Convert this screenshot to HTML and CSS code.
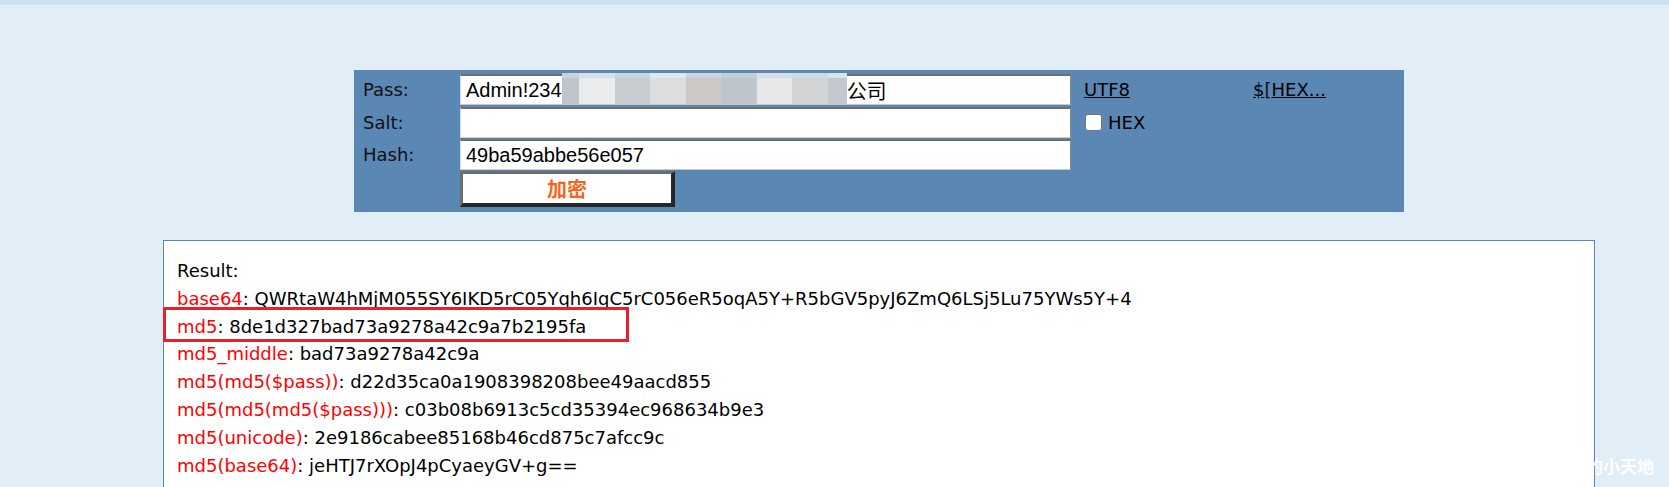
FILE: index.html
```html
<!DOCTYPE html>
<html lang="zh-CN">
<head>
    <meta charset="UTF-8">
    <title>Hash</title>
    <link rel="stylesheet" href="styles.css">
</head>
<body>

    <div class="topbar"></div>

    <div class="page">
        <!-- input form -->
        <form class="panel" onsubmit="return false">
            <label class="label">Pass:</label>
            <div class="field pass">
                <span>Admin!234</span>
                <span class="mosaic"></span>
                <span>公司</span>
            </div>
            <div class="links"><a href="#">UTF8</a></div>
            <div class="links"><a href="#">$</a>[<a href="#">HEX...</a></div>

            <label class="label">Salt:</label>
            <input class="field" type="text" value="">
            <label class="hex"><input type="checkbox"> HEX</label>

            <label class="label">Hash:</label>
            <input class="field" type="text" value="49ba59abbe56e057">

            <button class="btn-encrypt" type="submit">加密</button>
        </form>

        <!-- result list -->
        <div class="result">
            <div>Result:</div>
            <div><span class="key">base64</span>: QWRtaW4hMjM055SY6IKD5rC05Yqh6IqC5rC056eR5oqA5Y+R5bGV5pyJ6ZmQ6LSj5Lu75YWs5Y+4</div>
            <div><span class="key">md5</span>: 8de1d327bad73a9278a42c9a7b2195fa</div>
            <div><span class="key">md5_middle</span>: bad73a9278a42c9a</div>
            <div><span class="key">md5(md5($pass))</span>: d22d35ca0a1908398208bee49aacd855</div>
            <div><span class="key">md5(md5(md5($pass)))</span>: c03b08b6913c5cd35394ec968634b9e3</div>
            <div><span class="key">md5(unicode)</span>: 2e9186cabee85168b46cd875c7afcc9c</div>
            <div><span class="key">md5(base64)</span>: jeHTJ7rXOpJ4pCyaeyGV+g==</div>
            <div class="mark"></div>
        </div>
    </div>

    <div class="watermark">的小天地</div>

</body>
</html>
```

FILE: styles.css
```css
/* Basic Styles */
html, body {
    overflow: hidden;
}

body {
    margin: 0;
    background-color: #e1eef7;
    font-family: "DejaVu Sans", Verdana, sans-serif;
    color: #111;
}

.topbar {
    height: 5px;
    background-color: #cbe0ef;
}

.page {
    width: 1432px;
    margin-left: 163px;
}

/* Form panel */
.panel {
    width: 1050px;
    height: 142px;
    box-sizing: border-box;
    margin: 65px auto 0;
    padding: 4px 0 0 9px;
    background-color: #5b87b4;
    display: grid;
    grid-template-columns: 97px 624px 169px 1fr;
    grid-template-rows: 33px 32px 32px 36px;
    align-items: start;
}

.label {
    grid-column: 1;
    font-size: 18px;
    line-height: 31px;
    color: #111;
}

.field {
    grid-column: 2;
    width: 611px;
    height: 31px;
    box-sizing: border-box;
    margin: 0;
    padding: 0 5px;
    background: #fff;
    border-style: solid;
    border-width: 2px 1px 1px 1px;
    border-color: #6f6f6f #8a8a8a #c9c9c9 #d6d6d6;
    font-family: "Liberation Sans", Arial, "Noto Sans CJK SC", sans-serif;
    font-size: 20px;
    color: #000;
    outline: none;
}

.pass {
    display: flex;
    align-items: center;
}

.mosaic {
    width: 285px;
    align-self: stretch;
    margin: -3px 0 0 0;
    background:
        linear-gradient(90deg, #c9d3dc 0 17px, #d4dfe8 17px 53px, #c8d6e3 53px 88px, #dde8f1 88px 124px,
            #ccd6dd 124px 159px, #c3ced6 159px 195px, #d6dfe6 195px 230px, #c8dde8 230px 266px, #d6e4ee 266px 285px)
            top left / 100% 5px no-repeat,
        linear-gradient(90deg, #bfc3ca 0 17px, #ebecee 17px 53px, #c9ccd0 53px 88px, #dcdddf 88px 124px,
            #cbc9c5 124px 159px, #bec5cc 159px 195px, #e6e7e9 195px 230px, #d3d4d6 230px 266px, #c3c8ce 266px 285px);
}

.links {
    font-size: 18px;
    line-height: 31px;
}

.links a {
    color: #000;
    text-decoration: underline;
}

.hex {
    grid-column: 3;
    display: flex;
    align-items: center;
    gap: 6px;
    height: 31px;
    font-size: 18px;
    color: #000;
}

.hex input {
    appearance: none;
    width: 17px;
    height: 17px;
    margin: 0 0 0 1px;
    background: #fff;
    border: 1px solid #767676;
    border-radius: 3px;
}

.btn-encrypt {
    grid-column: 2;
    width: 215px;
    height: 36px;
    margin: 0;
    padding: 0;
    background: #fff;
    border-style: solid;
    border-width: 3px 4px 4px 3px;
    border-color: #6d6d6d #262626 #262626 #6d6d6d;
    font-family: "Noto Sans CJK SC", sans-serif;
    font-weight: bold;
    font-size: 20px;
    color: #f4661b;
}

/* Result */
.result {
    position: relative;
    margin-top: 28px;
    height: 280px;
    padding: 16px 13px 0;
    background: #fff;
    border: 1px solid #5b87b4;
    font-size: 18px;
    line-height: 27.8px;
    color: #000;
}

.key {
    color: #ff0000;
}

.mark {
    position: absolute;
    left: -1px;
    top: 66px;
    width: 466px;
    height: 35px;
    box-sizing: border-box;
    border: 3px solid #e8202a;
}

.watermark {
    position: absolute;
    right: 15px;
    top: 453px;
    color: #fff;
    font-family: "Noto Sans CJK SC", sans-serif;
    font-weight: bold;
    font-size: 17px;
}
```
